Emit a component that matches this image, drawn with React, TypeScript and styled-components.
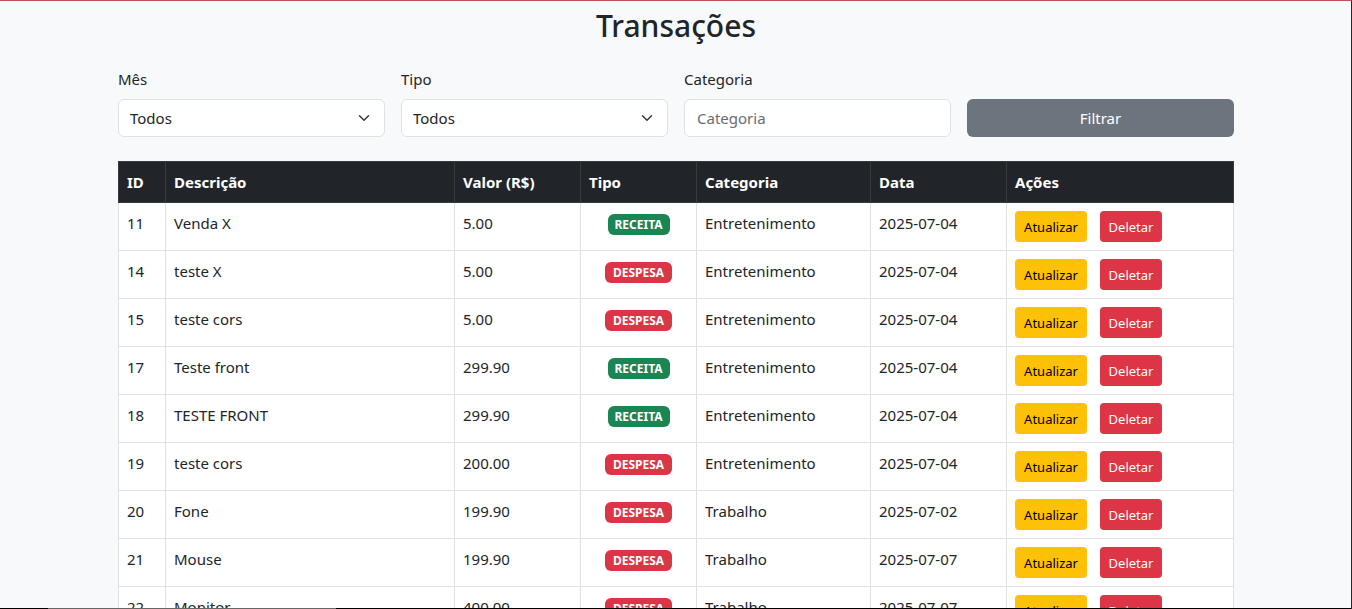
import React from 'react';
import styled, { createGlobalStyle } from 'styled-components';

const GlobalStyle = createGlobalStyle`
  *, *::before, *::after { box-sizing: border-box; }
  body {
    margin: 0;
    background: #f8f9fa;
    color: #212529;
    font-family: 'Segoe UI', 'Noto Sans', 'Open Sans', sans-serif;
    font-size: 15px;
    line-height: 24px;
  }
  button, input, select { font: inherit; margin: 0; }
`;

const Viewport = styled.div`
  position: relative;
  height: 100vh;
  overflow: hidden;
  background: #f8f9fa;
`;

const Frame = styled.div`
  position: absolute;
  inset: 0;
  border-top: 1px solid #c05055;
  border-right: 1px solid #26282b;
  pointer-events: none;

  &::after {
    content: '';
    position: absolute;
    left: 0;
    right: 0;
    bottom: 0;
    height: 1px;
    background: linear-gradient(to right, #000 48px, #666 48px 336px, #000 336px);
  }
`;

const Container = styled.main`
  max-width: 1140px;
  margin: 0 auto;
  padding: 7px 12px 0;
`;

const Title = styled.h2`
  margin: 0 0 22px;
  font-size: 30px;
  font-weight: 500;
  line-height: 38px;
  text-align: center;
`;

const Filters = styled.form`
  display: grid;
  grid-template-columns: repeat(4, 1fr);
  gap: 16px;
  align-items: end;
  margin-bottom: 24px;
`;

const Field = styled.div`
  display: flex;
  flex-direction: column;
  gap: 8px;
`;

const SelectWrap = styled.div`
  display: grid;
  align-items: center;

  > * { grid-area: 1 / 1; }

  svg {
    justify-self: end;
    margin-right: 13px;
    pointer-events: none;
  }
`;

const Select = styled.select`
  appearance: none;
  width: 100%;
  height: 38px;
  padding: 6px 36px 6px 11px;
  border: 1px solid #dee2e6;
  border-radius: 6px;
  background: #fff;
  color: #212529;
`;

const Input = styled.input`
  width: 100%;
  height: 38px;
  padding: 6px 12px;
  border: 1px solid #dee2e6;
  border-radius: 6px;
  background: #fff;
  color: #212529;

  &::placeholder { color: #6a6d70; opacity: 1; }
`;

const FilterButton = styled.button`
  height: 38px;
  border: 0;
  border-radius: 6px;
  background: #6c757d;
  color: #fff;
`;

const Table = styled.table`
  width: 100%;
  table-layout: fixed;
  border-collapse: collapse;
  background: #fff;
`;

const Col = styled.col<{ $width?: number }>`
  width: ${({ $width }) => ($width ? `${$width}px` : 'auto')};
`;

const HeadCell = styled.th`
  padding: 8px;
  border: 1px solid #373b3e;
  background: #212529;
  color: #fff;
  font-weight: 700;
  text-align: left;
`;

const Cell = styled.td<{ $center?: boolean }>`
  padding: 8px;
  border: 1px solid #dee2e6;
  text-align: ${({ $center }) => ($center ? 'center' : 'left')};
  vertical-align: top;
`;

const Badge = styled.span<{ $kind: Kind }>`
  display: inline-block;
  min-width: ${({ $kind }) => ($kind === 'RECEITA' ? 62 : 67)}px;
  padding: 5px 6px 4px;
  border-radius: 6px;
  background: ${({ $kind }) => ($kind === 'RECEITA' ? '#198754' : '#dc3545')};
  color: #fff;
  font-size: 12px;
  font-weight: 700;
  line-height: 12px;
`;

const Actions = styled.div`
  display: flex;
  gap: 13px;
`;

const ActionButton = styled.button<{ $danger?: boolean }>`
  min-width: ${({ $danger }) => ($danger ? 62 : 72)}px;
  height: 31px;
  padding: 1px 8px 0;
  border: 0;
  border-radius: 4px;
  background: ${({ $danger }) => ($danger ? '#dc3545' : '#ffc107')};
  color: ${({ $danger }) => ($danger ? '#fff' : '#000')};
  font-size: 13px;
`;

type Kind = 'RECEITA' | 'DESPESA';

interface Transaction {
  id: number;
  description: string;
  value: string;
  kind: Kind;
  category: string;
  date: string;
}

const transactions: Transaction[] = [
  { id: 11, description: 'Venda X', value: '5.00', kind: 'RECEITA', category: 'Entretenimento', date: '2025-07-04' },
  { id: 14, description: 'teste X', value: '5.00', kind: 'DESPESA', category: 'Entretenimento', date: '2025-07-04' },
  { id: 15, description: 'teste cors', value: '5.00', kind: 'DESPESA', category: 'Entretenimento', date: '2025-07-04' },
  { id: 17, description: 'Teste front', value: '299.90', kind: 'RECEITA', category: 'Entretenimento', date: '2025-07-04' },
  { id: 18, description: 'TESTE FRONT', value: '299.90', kind: 'RECEITA', category: 'Entretenimento', date: '2025-07-04' },
  { id: 19, description: 'teste cors', value: '200.00', kind: 'DESPESA', category: 'Entretenimento', date: '2025-07-04' },
  { id: 20, description: 'Fone', value: '199.90', kind: 'DESPESA', category: 'Trabalho', date: '2025-07-02' },
  { id: 21, description: 'Mouse', value: '199.90', kind: 'DESPESA', category: 'Trabalho', date: '2025-07-07' },
  { id: 22, description: 'Monitor', value: '400.00', kind: 'DESPESA', category: 'Trabalho', date: '2025-07-07' },
];

const headings = ['ID', 'Descrição', 'Valor (R$)', 'Tipo', 'Categoria', 'Data', 'Ações'];

const Chevron = () => (
  <svg width="16" height="12" viewBox="0 0 16 16" fill="none" stroke="#343a40" strokeWidth="2" strokeLinecap="round" strokeLinejoin="round" aria-hidden="true">
    <path d="m2 5 6 6 6-6" />
  </svg>
);

function SelectField({ id, label }: { id: string; label: string }) {
  return (
    <Field>
      <label htmlFor={id}>{label}</label>
      <SelectWrap>
        <Select id={id}>
          <option>Todos</option>
        </Select>
        <Chevron />
      </SelectWrap>
    </Field>
  );
}

export default function App() {
  return (
    <Viewport>
      <GlobalStyle />
      <Container>
        <Title>Transações</Title>
        <Filters onSubmit={(event) => event.preventDefault()}>
          <SelectField id="mes" label="Mês" />
          <SelectField id="tipo" label="Tipo" />
          <Field>
            <label htmlFor="categoria">Categoria</label>
            <Input id="categoria" type="text" placeholder="Categoria" />
          </Field>
          <FilterButton type="submit">Filtrar</FilterButton>
        </Filters>
        <Table>
          <colgroup>
            <Col $width={47} />
            <Col />
            <Col $width={126} />
            <Col $width={116} />
            <Col $width={174} />
            <Col $width={136} />
            <Col $width={227} />
          </colgroup>
          <thead>
            <tr>
              {headings.map((heading) => (
                <HeadCell key={heading} scope="col">{heading}</HeadCell>
              ))}
            </tr>
          </thead>
          <tbody>
            {transactions.map((item) => (
              <tr key={item.id}>
                <Cell>{item.id}</Cell>
                <Cell>{item.description}</Cell>
                <Cell>{item.value}</Cell>
                <Cell $center>
                  <Badge $kind={item.kind}>{item.kind}</Badge>
                </Cell>
                <Cell>{item.category}</Cell>
                <Cell>{item.date}</Cell>
                <Cell>
                  <Actions>
                    <ActionButton type="button">Atualizar</ActionButton>
                    <ActionButton type="button" $danger>Deletar</ActionButton>
                  </Actions>
                </Cell>
              </tr>
            ))}
          </tbody>
        </Table>
      </Container>
      <Frame />
    </Viewport>
  );
}
